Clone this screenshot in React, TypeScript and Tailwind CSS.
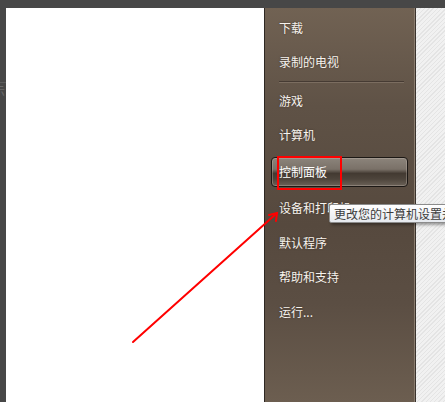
const items1 = [
  { label: "下载", h: "h-[35px]" },
  { label: "录制的电视", h: "h-[34px]" },
];

const items2 = [
  { label: "游戏", h: "h-[33px]" },
  { label: "计算机", h: "h-[35px]" },
];

const items3 = [
  { label: "设备和打印机", h: "h-[36px]" },
  { label: "默认程序", h: "h-[33px]" },
  { label: "帮助和支持", h: "h-[35px]" },
  { label: "运行...", h: "h-[35px]" },
];

function MenuItem({ label, h }: { label: string; h: string }) {
  return (
    <div className={`${h} flex items-center pl-[14px] text-[12px] text-[#f7f3ee] [text-shadow:0_0_2px_rgba(40,30,20,0.6)]`}>
      {label}
    </div>
  );
}

export default function App() {
  return (
    <div
      className="relative w-[445px] h-[402px] overflow-hidden flex flex-col bg-white"
      style={{ fontFamily: '"Noto Sans CJK SC", "Noto Sans", sans-serif' }}
    >
      {/* top dark strip */}
      <div className="h-[8px] w-full bg-[#474747] shrink-0" />

      <div className="flex flex-row flex-1">
        {/* left dark strip */}
        <div className="w-[6px] bg-[#474747] relative overflow-hidden">
          <div className="absolute top-[74px] left-0 w-full h-px bg-[#5c5c5c]" />
          <span className="absolute top-[74px] -left-[7px] text-[12px] text-[#6a6a6a]">示</span>
        </div>

        {/* white area */}
        <div className="flex-1 bg-white" />

        {/* start menu right pane */}
        <div className="w-[152px] flex flex-row">
          <div className="w-px bg-[#2e2823]" />
          <div className="flex-1 flex flex-col pt-[2px] pr-[6px] bg-[linear-gradient(to_bottom,#716253_0%,#5f5246_25%,#56493e_55%,#5b4e43_75%,#6c5e50_100%)]">
            {items1.map((it) => (
              <MenuItem key={it.label} {...it} />
            ))}
            <div className="h-[5px] flex flex-col justify-center pl-[14px] pr-[4px]">
              <div className="h-px bg-[#463b33]" />
              <div className="h-px bg-[#7b6d60]" />
            </div>
            {items2.map((it) => (
              <MenuItem key={it.label} {...it} />
            ))}
            <div className="mt-[5px] mb-[3px] ml-[6px] h-[30px] rounded-[4px] border border-[#1c1815] shadow-[inset_0_0_0_1px_rgba(200,190,180,0.35)] bg-[linear-gradient(to_bottom,#8c847b_0%,#7a7168_40%,#433a32_55%,#4d443b_75%,#6b6258_100%)] flex items-center pl-[7px] text-[12px] text-white">
              控制面板
            </div>
            {items3.map((it) => (
              <MenuItem key={it.label} {...it} />
            ))}
          </div>
          <div className="w-px bg-[#8a7c6e]" />
          <div className="w-px bg-[#3a332d]" />
        </div>

        {/* textured area */}
        <div className="w-[29px] bg-[repeating-linear-gradient(135deg,#e4e4e4_0px,#e4e4e4_1px,#f1f1f1_1px,#f1f1f1_3px)]" />
      </div>

      {/* red box around 控制面板 */}
      <div className="absolute left-[277px] top-[156px] w-[65px] h-[34px] border-2 border-[#ff0000]" />

      {/* tooltip */}
      <div className="absolute left-[329px] top-[204px] h-[19px] pl-[4px] pr-2 whitespace-nowrap flex items-center text-[12px] text-[#3c3c3c] border border-[#8c8c8c] rounded-[2px] bg-[linear-gradient(to_bottom,#ffffff,#e6e9ee)] shadow-[2px_2px_3px_rgba(0,0,0,0.35)]">
        更改您的计算机设置并自定义其功能。
      </div>

      {/* red arrow */}
      <svg className="absolute left-0 top-0 pointer-events-none" width="445" height="402">
        <g stroke="#ff0000" strokeWidth="2" fill="none" strokeLinecap="round">
          <line x1="133" y1="342" x2="277" y2="213" />
          <polyline points="269,215 277,213 276,221" />
        </g>
      </svg>
    </div>
  );
}
